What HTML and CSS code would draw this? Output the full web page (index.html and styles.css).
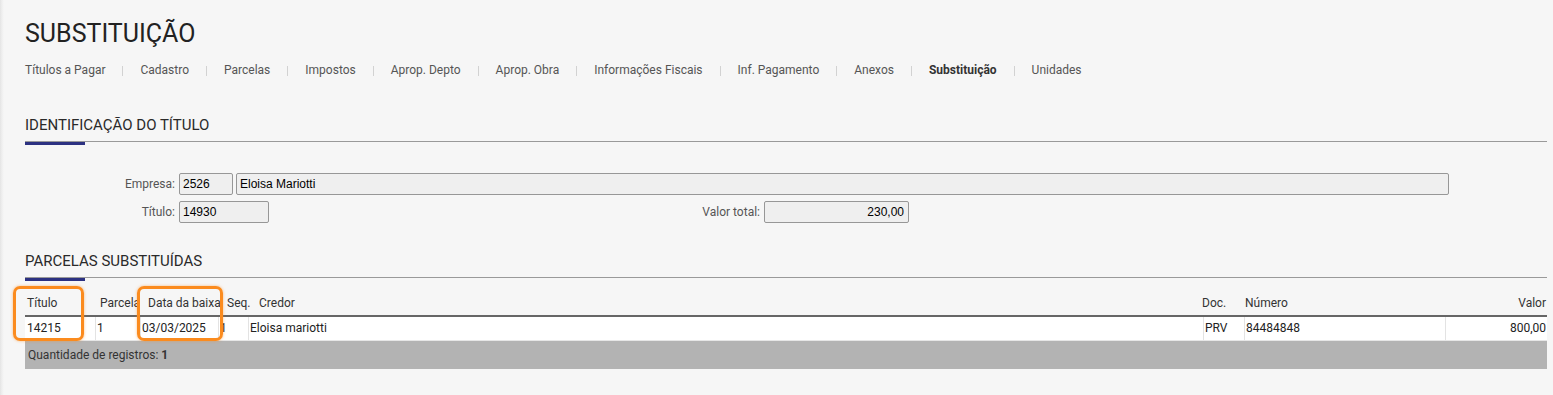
FILE: index.html
```html
<!DOCTYPE html>
<html lang="pt-BR">
<head>
<meta charset="utf-8">
<title>Substituição</title>
<link rel="stylesheet" href="styles.css">
</head>
<body>
<div class="page">
  <h1 class="page-title">SUBSTITUIÇÃO</h1>
  <nav class="tabs">
    <a class="tab">Títulos a Pagar</a><span class="sep"></span>
    <a class="tab">Cadastro</a><span class="sep"></span>
    <a class="tab">Parcelas</a><span class="sep"></span>
    <a class="tab">Impostos</a><span class="sep"></span>
    <a class="tab">Aprop. Depto</a><span class="sep"></span>
    <a class="tab">Aprop. Obra</a><span class="sep"></span>
    <a class="tab">Informações Fiscais</a><span class="sep"></span>
    <a class="tab">Inf. Pagamento</a><span class="sep"></span>
    <a class="tab">Anexos</a><span class="sep"></span>
    <a class="tab active">Substituição</a><span class="sep"></span>
    <a class="tab">Unidades</a>
  </nav>

  <h2 class="section-title first">IDENTIFICAÇÃO DO TÍTULO</h2>
  <div class="form">
    <div class="form-row">
      <label class="lbl">Empresa:</label>
      <input class="fld w-code" readonly value="2526">
      <input class="fld w-name" readonly value="Eloisa Mariotti">
    </div>
    <div class="form-row">
      <label class="lbl">Título:</label>
      <input class="fld w-titulo" readonly value="14930">
      <label class="lbl lbl-valor">Valor total:</label>
      <input class="fld w-valor right" readonly value="230,00">
    </div>
  </div>

  <h2 class="section-title second">PARCELAS SUBSTITUÍDAS</h2>
  <div class="grid-wrap">
    <div class="grid-head">
      <div class="hc">Título</div>
      <div class="hc">Parcela</div>
      <div class="hc">Data da baixa</div>
      <div class="hc">Seq.</div>
      <div class="hc">Credor</div>
      <div class="hc">Doc.</div>
      <div class="hc">Número</div>
      <div class="hc right">Valor</div>
    </div>
    <div class="grid-row">
      <div class="c">14215</div>
      <div class="c">1</div>
      <div class="c">03/03/2025</div>
      <div class="c">1</div>
      <div class="c">Eloisa mariotti</div>
      <div class="c">PRV</div>
      <div class="c">84484848</div>
      <div class="c right">800,00</div>
    </div>
    <div class="grid-foot">Quantidade de registros: <b>1</b></div>
    <div class="mark mark-titulo"></div>
    <div class="mark mark-data"></div>
  </div>
</div>
</body>
</html>
```

FILE: styles.css
```css
html, body {
  margin: 0;
  padding: 0;
}
body {
  background: linear-gradient(to right, #e4e4e4 0, #efefef 2px, #f6f6f6 4px, #f6f6f6 100%);
  font-family: Roboto, "Liberation Sans", Arial, sans-serif;
  color: #333;
  height: 395px;
  overflow: hidden;
}
.page {
  padding: 20px 6px 0 25px;
}
.page-title {
  margin: 0;
  font-size: 25px;
  line-height: 28px;
  font-weight: 400;
  color: #222;
}
.tabs {
  display: flex;
  align-items: center;
  margin-top: 15px;
  font-size: 12px;
  line-height: 15px;
}
.tab {
  color: #555;
  white-space: nowrap;
}
.tab.active {
  font-weight: 700;
  color: #333;
}
.sep {
  width: 1px;
  height: 10px;
  background: #d2d2d2;
  margin: 0 17px;
}
.section-title {
  position: relative;
  margin: 0;
  font-size: 15px;
  line-height: 17px;
  font-weight: 400;
  color: #2a2a2a;
  padding-bottom: 7px;
  border-bottom: 1px solid #9a9a9a;
}
.section-title::after {
  content: "";
  position: absolute;
  left: 0;
  bottom: -4px;
  width: 60px;
  height: 3px;
  background: #2c3181;
}
.section-title.first {
  margin-top: 39px;
}
.section-title.second {
  margin-top: 30px;
}
.form {
  margin-top: 31px;
  display: flex;
  flex-direction: column;
  gap: 6px;
}
.form-row {
  display: flex;
  align-items: center;
  height: 22px;
}
.lbl {
  width: 150px;
  text-align: right;
  font-size: 12px;
  color: #555;
  margin-right: 4px;
  flex: none;
}
.lbl-valor {
  width: 491px;
  margin-left: 0;
}
.fld {
  box-sizing: border-box;
  height: 22px;
  margin: 0;
  padding: 0 3px;
  border: 1px solid #979797;
  border-radius: 2px;
  background: #efefef;
  font-family: "Liberation Sans", Arial, sans-serif;
  font-size: 12px;
  color: #000;
  outline: none;
  flex: none;
}
.fld.right {
  text-align: right;
  padding-right: 4px;
}
.w-code { width: 54px; margin-right: 3px; }
.w-name { width: 1213px; }
.w-titulo { width: 90px; }
.w-valor { width: 145px; }

.grid-wrap {
  position: relative;
  margin-top: 18px;
  font-size: 12px;
}
.grid-head {
  display: grid;
  grid-template-columns: 73px 48px 79px 32px 1fr 43px 201px 103px;
  line-height: 14px;
  padding-bottom: 5px;
  border-bottom: 2px solid #666;
  color: #333;
}
.hc {
  padding-left: 2px;
  white-space: nowrap;
  overflow: hidden;
}
.hc.right {
  text-align: right;
  padding-right: 1px;
}
.grid-row {
  display: grid;
  grid-template-columns: 70px 45px 78px 30px 1fr 41px 201px 102px;
  background: #fff;
  height: 23px;
  line-height: 23px;
  border-bottom: 1px solid #e6e6e6;
  color: #222;
}
.c {
  padding-left: 2px;
  white-space: nowrap;
  overflow: hidden;
}
.c + .c {
  border-left: 1px solid #e3e3e3;
  padding-left: 1px;
}
.c.right {
  text-align: right;
  padding-right: 1px;
}
.grid-foot {
  background: #b3b3b3;
  height: 28px;
  line-height: 28px;
  padding-left: 3px;
  color: #333;
}
.grid-foot b {
  font-weight: 700;
}
.mark {
  position: absolute;
  top: -10px;
  height: 55px;
  box-sizing: border-box;
  border: 3px solid #fb8b1e;
  border-radius: 7px;
  box-shadow: 0 0 3px rgba(251, 139, 30, 0.55);
}
.mark-titulo {
  left: -12px;
  width: 71px;
}
.mark-data {
  left: 112px;
  width: 86px;
}
```
